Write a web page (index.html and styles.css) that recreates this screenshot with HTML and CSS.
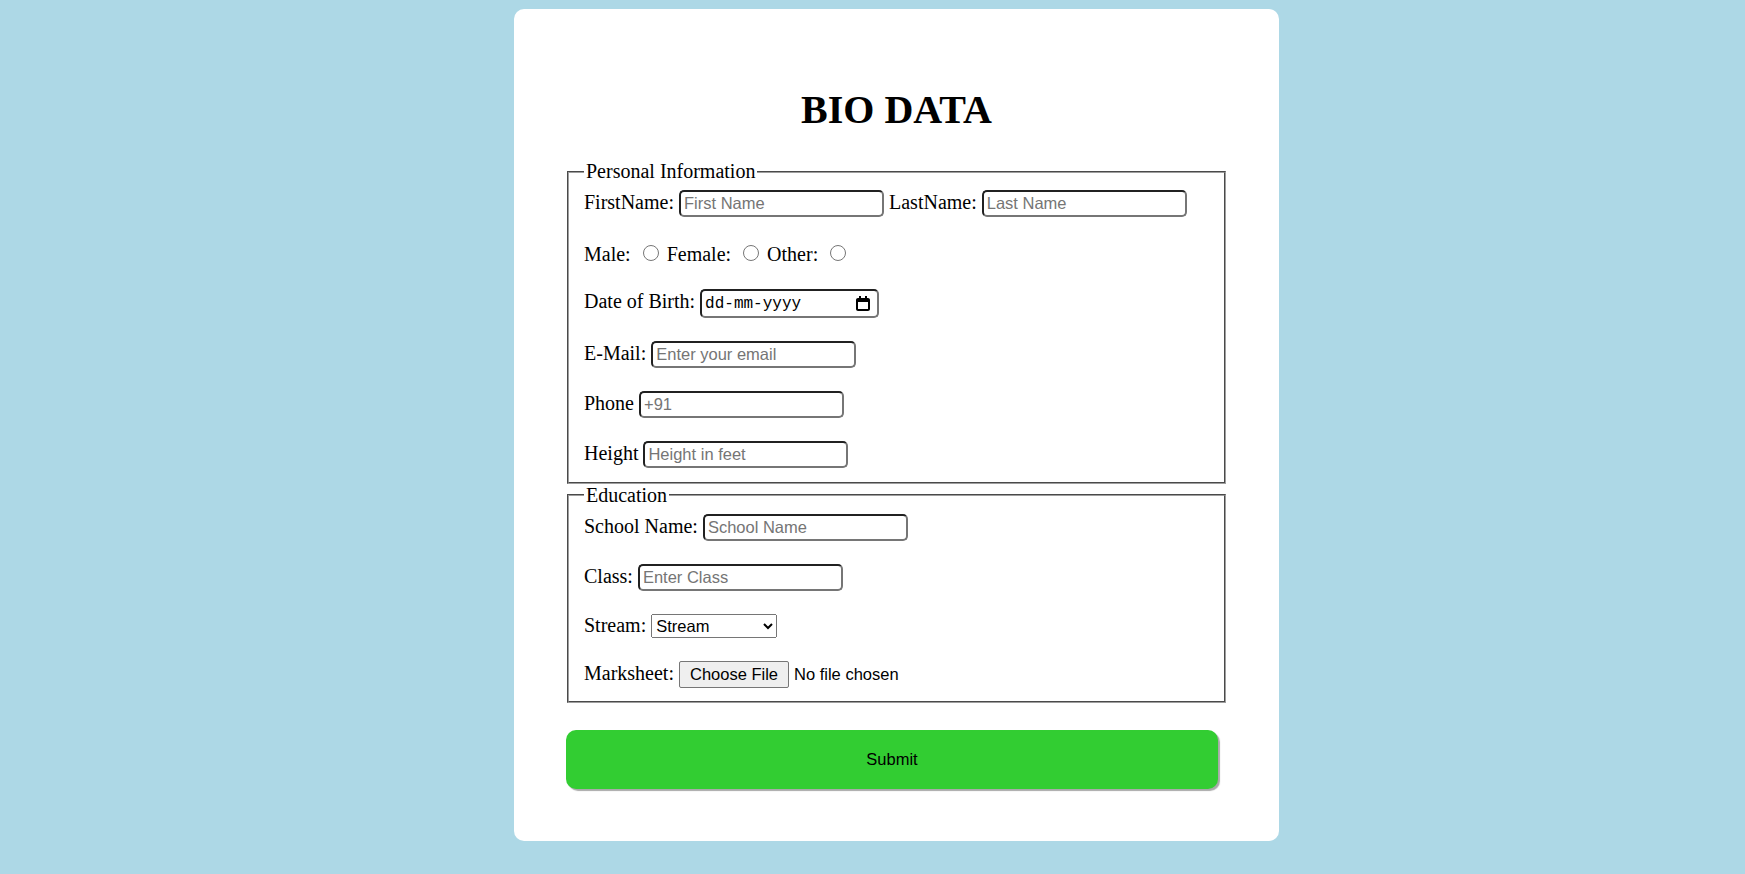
FILE: index.html
```html
<!DOCTYPE html>
<html lang="en">
<head>
<meta charset="utf-8">
<title>Bio Data</title>
<link rel="stylesheet" href="styles.css">
</head>
<body>
<div class="card">
  <h1 class="title">BIO DATA</h1>
  <form class="form">
    <fieldset class="group">
      <legend class="group-title">Personal Information</legend>
      <label for="fn">FirstName:</label> <input class="field" id="fn" type="text" placeholder="First Name"> <label for="ln">LastName:</label> <input class="field" id="ln" type="text" placeholder="Last Name"><br><br>
      <label for="m">Male:</label> <input class="radio" id="m" type="radio" name="gender"> <label for="f">Female:</label> <input class="radio" id="f" type="radio" name="gender"> <label for="o">Other:</label> <input class="radio" id="o" type="radio" name="gender"><br><br>
      <label for="dob">Date of Birth:</label> <span class="date-box"><input class="date-text" id="dob" type="text" value="dd-mm-yyyy"><svg class="cal-icon" width="14" height="15" viewBox="0 0 14 15" aria-hidden="true"><path d="M12 2h-1V0H9v2H5V0H3v2H2C.9 2 0 2.9 0 4v9c0 1.1.9 2 2 2h10c1.1 0 2-.9 2-2V4c0-1.1-.9-2-2-2zm0 11H2V6h10v7z" fill="#000"/></svg></span><br><br>
      <label for="em">E-Mail:</label> <input class="field" id="em" type="email" placeholder="Enter your email"><br><br>
      <label for="ph">Phone</label> <input class="field" id="ph" type="tel" placeholder="+91"><br><br>
      <label for="ht">Height</label> <input class="field" id="ht" type="text" placeholder="Height in feet">
    </fieldset>
    <fieldset class="group">
      <legend class="group-title">Education</legend>
      <label for="sn">School Name:</label> <input class="field" id="sn" type="text" placeholder="School Name"><br><br>
      <label for="cl">Class:</label> <input class="field" id="cl" type="text" placeholder="Enter Class"><br><br>
      <label for="st">Stream:</label> <select class="select" id="st">
        <option>Stream</option>
        <option>Science</option>
        <option>Commerce</option>
        <option>Arts</option>
      </select><br><br>
      <label for="ms">Marksheet:</label> <input class="file" id="ms" type="file">
    </fieldset>
    <button class="submit" type="submit">Submit</button>
  </form>
</div>
</body>
</html>
```

FILE: styles.css
```css
html, body {
  margin: 0;
  padding: 0;
}

body {
  background: #add8e6;
  font-family: "Liberation Serif", "Times New Roman", serif;
  min-height: 874px;
  padding-top: 9px;
  box-sizing: border-box;
}

.card {
  width: 663px;
  margin-left: calc(50% - 358.5px);
  padding: 51px 51px 52px;
  background: #fff;
  border-radius: 10px;
  font-size: 20px;
  color: #000;
}

.title {
  font-size: 40px;
  line-height: 46px;
  font-weight: bold;
  text-align: center;
  margin: 27px 0;
}

.form {
  margin: 0;
}

.group {
  margin: 0 2px;
  padding: 7px 15px 13.5px;
  border: 2px groove #9e9e9e;
}

.group-title {
  padding: 0 2px;
}

.field {
  width: 205px;
  height: 27px;
  box-sizing: border-box;
  border: 2px inset #767676;
  border-radius: 5px;
  padding: 1px 3px;
  font-family: "Liberation Sans", Arial, sans-serif;
  font-size: 16.5px;
}

.radio {
  width: 16px;
  height: 16px;
  margin: 5px 3px 0 7px;
}

.date-box {
  display: inline-flex;
  align-items: center;
  width: 179px;
  height: 29px;
  box-sizing: border-box;
  border: 2px inset #767676;
  border-radius: 5px;
  padding: 0 7px 0 3px;
  background: #fff;
}

.date-text {
  flex: 1;
  min-width: 0;
  border: none;
  padding: 0;
  margin: 0;
  outline: none;
  background: transparent;
  color: #000;
  font-family: "Liberation Mono", "Courier New", monospace;
  font-size: 16px;
}

.cal-icon {
  display: block;
  flex: none;
}

.select {
  width: 126px;
  height: 24px;
  font-family: "Liberation Sans", Arial, sans-serif;
  font-size: 16.5px;
}

.file {
  font-family: "Liberation Sans", Arial, sans-serif;
  font-size: 16.5px;
}

.file::file-selector-button {
  height: 27px;
  padding: 2px 10px;
  margin-right: 5px;
  font-family: "Liberation Sans", Arial, sans-serif;
  font-size: 16.5px;
  color: #000;
  background: #efefef;
  border: 1px solid #767676;
  border-radius: 2px;
}

.submit {
  display: block;
  width: 652px;
  height: 59px;
  margin: 27px 0 0 1px;
  background: #32cd32;
  border: none;
  border-radius: 10px;
  box-shadow: 2px 2px 1px #a9a9a9;
  font-family: "Liberation Sans", Arial, sans-serif;
  font-size: 16.5px;
  color: #000;
}
```
